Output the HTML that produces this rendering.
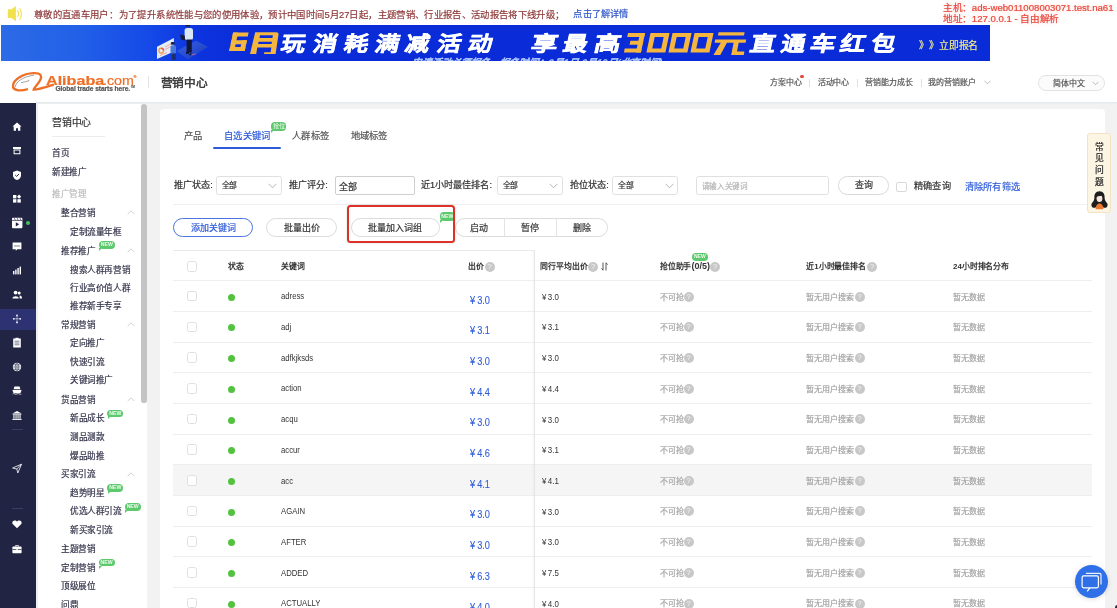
<!DOCTYPE html><html lang="zh-CN"><head><meta charset="utf-8"><style>
*{margin:0;padding:0;box-sizing:border-box}
html,body{width:1117px;height:608px;overflow:hidden;background:#fff;font-family:"Liberation Sans",sans-serif}
.t{position:absolute;white-space:nowrap;-webkit-text-stroke-width:0.2px}
.b{position:absolute}
.new{position:absolute;background:#5cc96c;color:#eefaee;font-size:5px;font-weight:bold;line-height:8px;text-align:center;border-radius:4px;letter-spacing:0;-webkit-text-stroke-width:0}
.bub::after{content:'';position:absolute;left:0.3px;bottom:-2.4px;width:0;height:0;border-left:3.2px solid #5cc96c;border-bottom:3px solid transparent}
.q{position:absolute;width:10px;height:10px;border-radius:50%;background:#c8c8c8;color:#f4f4f4;font-size:7.5px;line-height:10px;text-align:center;font-weight:normal;-webkit-text-stroke-width:0}
.cb{position:absolute;width:10.5px;height:10.5px;border:1px solid #e0e0e0;border-radius:2.5px;background:#fff}
.dot{position:absolute;width:7px;height:7px;border-radius:50%;background:#52c23f}
</style></head><body><div id="w" style="position:absolute;left:0;top:0;width:1117px;height:608px;overflow:hidden;will-change:transform">
<svg class="b" style="left:0;top:0" width="28" height="25" viewBox="0 0 28 25">
<path d="M8.4 9.3 h3 L15.9 6 V21.3 L11.4 18 H8.4 a0.6 0.6 0 0 1 -0.6 -0.6 V9.9 a0.6 0.6 0 0 1 0.6 -0.6Z" fill="#f1e14f"/>
<path d="M17.6 10.3 Q19.6 13.6 17.6 17" stroke="#f1e14f" stroke-width="1.1" fill="none"/>
<path d="M19.6 8.2 Q23.2 13.6 19.6 19.8" stroke="#f1e14f" stroke-width="1.1" fill="none"/>
</svg>
<div class="t" style="left:34px;top:8.60px;font-size:9.35px;line-height:13px;color:#8f3a3a;font-weight:normal;"><span style="letter-spacing:0.35px">尊敬的直通车用户：</span></div>
<div class="t" style="left:118.8px;top:8.60px;font-size:9.35px;line-height:13px;color:#8f3a3a;font-weight:normal;"><span style="letter-spacing:0.35px">为了提升系统性能与您的使用体验，预计中国时间</span>5<span style="letter-spacing:0.35px">月</span>27<span style="letter-spacing:0.35px">日起，主题营销、行业报告、活动报告将下线升级；</span></div>
<div class="t" style="left:573.4px;top:8.40px;font-size:9.2px;line-height:13px;color:#2f57c9;font-weight:normal;"><span style="letter-spacing:0.20px">点击了解详情</span></div>
<div class="t" style="left:943px;top:2.40px;font-size:9.6px;line-height:11px;color:#e8473c;font-weight:normal;text-shadow:0 0 4px rgba(240,110,90,0.35)"><span style="letter-spacing:-0.40px">主机：</span>ads-web011008003071.test.na61</div>
<div class="t" style="left:943px;top:13.40px;font-size:9.6px;line-height:11px;color:#e8473c;font-weight:normal;text-shadow:0 0 4px rgba(240,110,90,0.35)"><span style="letter-spacing:-0.40px">地址：</span>127.0.0.1 - <span style="letter-spacing:-0.40px">自由解析</span></div>
<div class="b" style="left:1px;top:25px;width:989px;height:35.5px;background:linear-gradient(90deg,#2c6ae6 0%,#2260e8 8%,#1549e8 15%,#0c33de 20%,#0a2bd8 26%,#0a2bd8 100%)"></div>
<svg class="b" style="left:150px;top:25px" width="62" height="36" viewBox="0 0 62 36">
<defs><linearGradient id="pf" x1="0" y1="0" x2="1" y2="1"><stop offset="0" stop-color="#3a64e0"/><stop offset="1" stop-color="#1838c0"/></linearGradient></defs>
<path d="M26.5 25.9 L46 15.8 L58 21.8 L38 34.6 Z" fill="url(#pf)"/>
<path d="M7 21.8 L23.9 13.1 L23.9 26.5 L7 33.9 Z" fill="#e4ecf8"/>
<circle cx="11.2" cy="25.6" r="2.4" fill="none" stroke="#f0a050" stroke-width="1.4"/>
<path d="M11.2 23.2 a2.4 2.4 0 0 1 2.4 2.4" stroke="#e05a6a" stroke-width="1.4" fill="none"/>
<path d="M15 22 L21 19 M15 24.5 L21 21.5 M10 30.5 L17 27.5" stroke="#f08a6a" stroke-width="0.7"/>
<rect x="34.6" y="3" width="8.4" height="12" rx="2.5" fill="#d8e6f5"/>
<rect x="35.5" y="-0.5" width="4.6" height="2" rx="1" fill="#1b1f33"/>
<path d="M30.2 9.5 L34.6 10.5 L35.3 15.5 L31 14.6Z" fill="#161c36"/>
<rect x="36.6" y="14.5" width="5.2" height="13" fill="#10173a"/>
<path d="M36 27 h3 v1.8 h-3z M39.5 28.5 h2.6 v1.8 h-2.6z" fill="#0d1330"/>
<rect x="20.5" y="20.3" width="5.5" height="8.5" rx="1.5" fill="#4a78d8"/>
<rect x="20.8" y="17" width="3.8" height="2.8" rx="1.3" fill="#1b1f33"/>
<rect x="21.8" y="28.5" width="4" height="6.5" fill="#1e2f70"/>
<path d="M41 30 L46 28.8" stroke="#e86a8a" stroke-width="0.8"/>
</svg>
<div class="t" style="left:281px;top:29px;font-size:24px;line-height:30px;color:#ffffff;font-weight:900;-webkit-text-stroke:0.7px #ffffff;transform:skewX(-12deg) scale(1,0.86);transform-origin:0 50%">玩</div>
<div class="t" style="left:313px;top:29px;font-size:24px;line-height:30px;color:#ffffff;font-weight:900;-webkit-text-stroke:0.7px #ffffff;transform:skewX(-12deg) scale(1,0.86);transform-origin:0 50%">消</div>
<div class="t" style="left:343.5px;top:29px;font-size:24px;line-height:30px;color:#ffffff;font-weight:900;-webkit-text-stroke:0.7px #ffffff;transform:skewX(-12deg) scale(1,0.86);transform-origin:0 50%">耗</div>
<div class="t" style="left:375px;top:29px;font-size:24px;line-height:30px;color:#ffffff;font-weight:900;-webkit-text-stroke:0.7px #ffffff;transform:skewX(-12deg) scale(1,0.86);transform-origin:0 50%">满</div>
<div class="t" style="left:405px;top:29px;font-size:24px;line-height:30px;color:#ffffff;font-weight:900;-webkit-text-stroke:0.7px #ffffff;transform:skewX(-12deg) scale(1,0.86);transform-origin:0 50%">减</div>
<div class="t" style="left:436.5px;top:29px;font-size:24px;line-height:30px;color:#ffffff;font-weight:900;-webkit-text-stroke:0.7px #ffffff;transform:skewX(-12deg) scale(1,0.86);transform-origin:0 50%">活</div>
<div class="t" style="left:468px;top:29px;font-size:24px;line-height:30px;color:#ffffff;font-weight:900;-webkit-text-stroke:0.7px #ffffff;transform:skewX(-12deg) scale(1,0.86);transform-origin:0 50%">动</div>
<div class="t" style="left:531px;top:29px;font-size:24px;line-height:30px;color:#ffffff;font-weight:900;-webkit-text-stroke:0.7px #ffffff;transform:skewX(-12deg) scale(1.1,0.86);transform-origin:0 50%">享</div>
<div class="t" style="left:562.5px;top:29px;font-size:24px;line-height:30px;color:#ffffff;font-weight:900;-webkit-text-stroke:0.7px #ffffff;transform:skewX(-12deg) scale(1,0.86);transform-origin:0 50%">最</div>
<div class="t" style="left:594px;top:29px;font-size:24px;line-height:30px;color:#ffffff;font-weight:900;-webkit-text-stroke:0.7px #ffffff;transform:skewX(-12deg) scale(1.1,0.86);transform-origin:0 50%">高</div>
<div class="t" style="left:750px;top:29px;font-size:24px;line-height:30px;color:#ffffff;font-weight:900;-webkit-text-stroke:0.7px #ffffff;transform:skewX(-12deg) scale(1.05,0.86);transform-origin:0 50%">直</div>
<div class="t" style="left:780.5px;top:29px;font-size:24px;line-height:30px;color:#ffffff;font-weight:900;-webkit-text-stroke:0.7px #ffffff;transform:skewX(-12deg) scale(1,0.86);transform-origin:0 50%">通</div>
<div class="t" style="left:809.5px;top:29px;font-size:24px;line-height:30px;color:#ffffff;font-weight:900;-webkit-text-stroke:0.7px #ffffff;transform:skewX(-12deg) scale(1.05,0.86);transform-origin:0 50%">车</div>
<div class="t" style="left:840px;top:29px;font-size:24px;line-height:30px;color:#ffffff;font-weight:900;-webkit-text-stroke:0.7px #ffffff;transform:skewX(-12deg) scale(1.05,0.86);transform-origin:0 50%">红</div>
<div class="t" style="left:871px;top:29px;font-size:24px;line-height:30px;color:#ffffff;font-weight:900;-webkit-text-stroke:0.7px #ffffff;transform:skewX(-12deg) scale(1,0.86);transform-origin:0 50%">包</div>
<svg class="b" style="left:0;top:0" width="1000" height="62" viewBox="0 0 1000 62"><g fill="#f5b63f" transform="translate(0 52) skewX(-12) translate(0 -52)"><rect x="229" y="32.6" width="15.5" height="4.0"/><rect x="229" y="32.6" width="5.0" height="18.5"/><rect x="229" y="40.370000000000005" width="15.5" height="4.0"/><rect x="229" y="47.1" width="15.5" height="4.0"/><rect x="239.5" y="40.370000000000005" width="5.0" height="10.729999999999999"/><rect x="624" y="33" width="17" height="4.0"/><rect x="628" y="40.7" width="13" height="4.0"/><rect x="624" y="48.4" width="17" height="4.0"/><rect x="636.0" y="33" width="5.0" height="19.4"/><path d="M646.5 33h19v19.4h-19z M651.5 37.0v11.399999999999999h9.0v-11.399999999999999z" fill-rule="evenodd"/><path d="M668.5 33h19v19.4h-19z M673.5 37.0v11.399999999999999h9.0v-11.399999999999999z" fill-rule="evenodd"/><path d="M690.5 33h19v19.4h-19z M695.5 37.0v11.399999999999999h9.0v-11.399999999999999z" fill-rule="evenodd"/></g><g fill="#f5b63f"><path fill-rule="evenodd" d="M255.2 32.3 H276.4 Q278.9 32.3 278.5 34.6 L275.6 53.9 H264 L264.3 52.2 H270.6 L271.4 47.5 H257.3 L256.2 53.9 H250 Z M260 35.3 H272.9 L272.4 38 H259.5 Z M258.6 41.7 H272 L271.5 44.1 H258.1 Z"/><path d="M718.6 32.2 H744.6 L744 35.6 H718 Z M715.2 39.4 H746.2 L745.6 42.8 H714.6 Z M720.8 42.8 H726.9 L720.3 54.9 H713.4 Z M733.6 42.8 H738.7 L737 51.6 H744.4 L743.8 54.9 H731.2 Z"/></g></svg>
<div class="t" style="left:412px;top:56.50px;font-size:9.7px;line-height:12px;color:#a9c2ff;font-weight:bold;font-style:italic;transform:skewX(-10deg)"><span style="letter-spacing:-0.30px">申请活动必须报名，报名时间：</span>6<span style="letter-spacing:-0.30px">月</span>1<span style="letter-spacing:-0.30px">日</span>-6<span style="letter-spacing:-0.30px">月</span>10<span style="letter-spacing:-0.30px">日</span>(<span style="letter-spacing:-0.30px">北京时间</span>)</div>
<div class="b" style="left:0px;top:60.5px;width:1000px;height:8px;background:#fff"></div>
<div class="t" style="left:918.5px;top:39.00px;font-size:9.8px;line-height:14px;color:#f2ec8c;font-weight:normal;"><span style="letter-spacing:-0.20px">》</span></div>
<div class="t" style="left:928.5px;top:39.00px;font-size:9.8px;line-height:14px;color:#f2ec8c;font-weight:normal;"><span style="letter-spacing:-0.20px">》</span></div>
<div class="t" style="left:939px;top:39.00px;font-size:9.8px;line-height:14px;color:#f2ec8c;font-weight:normal;"><span style="letter-spacing:-0.20px">立即报名</span></div>
<svg class="b" style="left:0;top:60px" width="60" height="40" viewBox="0 60 60 40">
<path d="M27 89.3 C20 91.3 12.5 90.5 13 85.5 C13.6 79.5 23 73.6 33.5 73.2 C41 73 42.5 76 40 80.5 C37.5 85 34 87.5 33.6 89.6 C37 89.8 45 87.3 53 84.8" stroke="#ee7028" stroke-width="2.3" fill="none" stroke-linecap="round"/>
<path d="M15.2 87 C15.8 82 23 76.5 34 75.2" stroke="#333" stroke-width="0.45" fill="none"/>
<path d="M21 82.6 C24 82.2 27 81.4 29 80.6 L28.6 79.8" stroke="#333" stroke-width="0.45" fill="none"/>
</svg>
<div class="t" style="left:45.5px;top:72.50px;font-size:13px;line-height:15px;color:#ee7028;font-weight:bold;letter-spacing:0px;transform:scaleX(1.24);transform-origin:0 50%">Alibaba</div>
<div class="t" style="left:102.5px;top:72.50px;font-size:13px;line-height:15px;color:#ee7028;font-weight:normal;letter-spacing:0px;transform:scaleX(1.1);transform-origin:0 50%">.com</div>
<div class="t" style="left:133.5px;top:73.50px;font-size:4px;line-height:5px;color:#ee6f22;font-weight:normal;">®</div>
<div class="t" style="left:55.5px;top:85.20px;font-size:6.6px;line-height:8px;color:#555;font-weight:bold;letter-spacing:-0.05px">Global trade starts here.</div>
<div class="t" style="left:131px;top:85.50px;font-size:2.6px;line-height:4px;color:#555;font-weight:normal;">TM</div>
<div class="b" style="left:147.5px;top:76px;width:1px;height:11.5px;background:#e3e3e3"></div>
<div class="t" style="left:160.5px;top:74.70px;font-size:11.7px;line-height:16px;color:#333;font-weight:normal;-webkit-text-stroke-width:0.45px"><span style="letter-spacing:-0.30px">营销中心</span></div>
<div class="t" style="left:769.7px;top:77.20px;font-size:7.95px;line-height:12px;color:#555;font-weight:normal;"><span style="letter-spacing:-0.05px">方案中心</span></div>
<div class="t" style="left:817.6px;top:77.20px;font-size:7.95px;line-height:12px;color:#555;font-weight:normal;"><span style="letter-spacing:-0.05px">活动中心</span></div>
<div class="t" style="left:864.9px;top:77.20px;font-size:7.95px;line-height:12px;color:#555;font-weight:normal;"><span style="letter-spacing:-0.05px">营销能力成长</span></div>
<div class="t" style="left:928.3px;top:77.20px;font-size:7.95px;line-height:12px;color:#555;font-weight:normal;"><span style="letter-spacing:-0.05px">我的营销账户</span></div>
<div class="b" style="left:809px;top:78.5px;width:0.8px;height:8.2px;background:#dde0e8"></div>
<div class="b" style="left:857.4px;top:78.5px;width:0.8px;height:8.2px;background:#dde0e8"></div>
<div class="b" style="left:920.6px;top:78.5px;width:0.8px;height:8.2px;background:#dde0e8"></div>
<div class="b" style="left:800.1px;top:74.6px;width:3.7px;height:3.7px;background:#e8473c;border-radius:50%"></div>
<svg class="b" style="left:984px;top:80px" width="7" height="5" viewBox="0 0 7 5"><path d="M0.5 0.8 L3.5 3.8 L6.5 0.8" stroke="#aaa" stroke-width="0.8" fill="none"/></svg>
<div class="b" style="left:1038px;top:74.5px;width:66.5px;height:16px;border:1px solid #e2e2e2;border-radius:8px;background:#fbfbfb"></div>
<div class="t" style="left:1052.7px;top:77.60px;font-size:8px;line-height:12px;color:#555;font-weight:normal;">简体中文</div>
<svg class="b" style="left:1092px;top:80.5px" width="7" height="5" viewBox="0 0 7 5"><path d="M0.5 0.8 L3.5 3.8 L6.5 0.8" stroke="#aaa" stroke-width="0.8" fill="none"/></svg>
<div class="b" style="left:36px;top:102px;width:1081px;height:2.2px;background:linear-gradient(#e4e7eb,#eef0f2)"></div>
<div class="b" style="left:146.8px;top:104px;width:971px;height:504px;background:#f2f2f2"></div>
<div class="b" style="left:159.8px;top:108.8px;width:945.2px;height:500px;background:#fff;border-radius:4px 4px 0 0"></div>
<div class="b" style="left:0px;top:102.8px;width:36px;height:506px;background:#222444"></div>
<div class="b" style="left:0px;top:309px;width:36px;height:20.5px;background:#2d3272"></div>
<div class="b" style="left:36px;top:104px;width:2px;height:504px;background:#eef0f4"></div>
<div class="b" style="left:38px;top:104px;width:108.8px;height:504px;background:#fff"></div>
<div class="b" style="left:141px;top:104.2px;width:5.6px;height:299.2px;background:#c4c4c4;border-radius:2.8px"></div>
<div class="b" style="left:12px;top:428.6px;width:11px;height:0.8px;background:#3a3d66"></div>
<div class="b" style="left:12px;top:508.2px;width:11px;height:0.8px;background:#3a3d66"></div>

<svg class="b" style="left:0;top:103px" width="36" height="505" viewBox="0 103 36 505" fill="#fff">
<!-- home 126.8 -->
<path d="M17 122.5 L21.5 126.6 L20.3 126.6 L20.3 130.8 L18 130.8 L18 128.2 L16 128.2 L16 130.8 L13.7 130.8 L13.7 126.6 L12.5 126.6 Z"/>
<!-- box 150.8 -->
<path d="M13 147 h8 v2 h-8z"/><path d="M13.6 149.6 h6.8 v4.6 h-6.8z M14.6 150.6 v2.6 h4.8 v-2.6z" fill-rule="evenodd"/>
<!-- shield 175 -->
<path d="M17 170.6 L21 172 L21 175.2 C21 178 19 179.4 17 180 C15 179.4 13 178 13 175.2 L13 172 Z"/>
<path d="M15.2 175 L16.6 176.4 L19 174" stroke="#222444" stroke-width="1" fill="none"/>
<!-- apps 198.7 -->
<rect x="13" y="195" width="3.4" height="3.4"/><rect x="13" y="199.2" width="3.4" height="3.4"/><rect x="17.4" y="199.2" width="3.4" height="3.4"/>
<path d="M19.1 194.6 L21.2 196.7 L19.1 198.8 L17 196.7Z"/>
<!-- video 222.9 -->
<rect x="12" y="217.8" width="10.4" height="10.4" rx="1"/>
<path d="M12 220.4 h10.4" stroke="#222444" stroke-width="0.7"/>
<path d="M14.2 217.8 l1.2 2.6 M17 217.8 l1.2 2.6 M19.8 217.8 l1.2 2.6" stroke="#222444" stroke-width="0.6"/>
<path d="M15.8 222.2 L19.2 224.3 L15.8 226.4Z" fill="#222444"/>
<!-- chat 246.6 -->
<path d="M12.6 242.6 h8.8 v6.6 h-4 l-1.6 1.6 v-1.6 h-3.2z"/>
<circle cx="15" cy="245.9" r="0.6" fill="#222444"/><circle cx="17" cy="245.9" r="0.6" fill="#222444"/><circle cx="19" cy="245.9" r="0.6" fill="#222444"/>
<!-- chart 271 -->
<rect x="13" y="271" width="1.4" height="3.4"/><rect x="15.2" y="269.6" width="1.4" height="4.8"/><rect x="17.4" y="268" width="1.4" height="6.4"/><rect x="19.6" y="266.6" width="1.4" height="7.8"/>
<!-- users 295 -->
<circle cx="15.6" cy="292.6" r="1.9"/><path d="M12.4 298.6 C12.4 295.6 18.8 295.6 18.8 298.6Z"/>
<circle cx="19.2" cy="293" r="1.5"/><path d="M19.6 295.4 C21.6 295.6 22 296.8 22 298.6 L19.6 298.6Z"/>
<!-- move 319 -->
<circle cx="17" cy="315.4" r="0.9"/><circle cx="13.8" cy="318.8" r="0.9"/><circle cx="20.2" cy="318.8" r="0.9"/><circle cx="17" cy="322.4" r="0.9"/>
<path d="M17 316 L17 322 M14.4 318.8 L19.6 318.8" stroke="#fff" stroke-width="0.5"/>
<!-- clipboard 342.6 -->
<path d="M13.2 338.6 h7.6 v9 h-7.6z"/><rect x="15.4" y="337.8" width="3.2" height="1.6" fill="#fff"/>
<path d="M14.6 341.2 h4.8 M14.6 343 h4.8 M14.6 344.8 h4.8" stroke="#222444" stroke-width="0.6"/>
<!-- globe 367 -->
<circle cx="17" cy="367" r="4.2"/>
<path d="M12.8 367 h8.4 M17 362.8 v8.4 M13.6 364.8 h6.8 M13.6 369.2 h6.8" stroke="#222444" stroke-width="0.5"/>
<ellipse cx="17" cy="367" rx="1.8" ry="4.2" fill="none" stroke="#222444" stroke-width="0.5"/>
<!-- ship 390.8 -->
<path d="M14.4 386.6 h5.2 l0.8 2.6 h-6.8z"/><path d="M12.4 390 h9.2 l-1.2 3.2 h-6.8z"/><path d="M12.6 394 q1.1 -0.8 2.2 0 q1.1 0.8 2.2 0 q1.1 -0.8 2.2 0 q1.1 0.8 2.2 0" stroke="#fff" stroke-width="0.6" fill="none"/>
<!-- bank 415.4 -->
<path d="M17 411 L21.6 413.4 L12.4 413.4Z"/><rect x="12.6" y="413.8" width="8.8" height="0.9"/>
<rect x="13.4" y="415" width="1.1" height="3.6"/><rect x="15.5" y="415" width="1.1" height="3.6"/><rect x="17.5" y="415" width="1.1" height="3.6"/><rect x="19.5" y="415" width="1.1" height="3.6"/>
<rect x="12.4" y="418.8" width="9.2" height="1.1"/>
<!-- send 468.5 -->
<path d="M21.5 464.2 L12.6 468 L16.8 469 L17.8 473 Z M16.8 469 L21.5 464.2" stroke="#fff" stroke-width="0.8" fill="none" stroke-linejoin="round"/>
<!-- heart 524.3 -->
<path d="M17 528.3 L13.2 524.6 C11.6 523 12.4 520.6 14.6 520.4 C15.6 520.3 16.5 520.9 17 521.6 C17.5 520.9 18.4 520.3 19.4 520.4 C21.6 520.6 22.4 523 20.8 524.6Z"/>
<!-- briefcase 549 -->
<path d="M15.2 545.2 h3.6 v1.4 h-0.9 v-0.6 h-1.8 v0.6 h-0.9z"/><rect x="12.4" y="546.6" width="9.2" height="6.6" rx="0.8"/>
<rect x="12.4" y="549" width="9.2" height="0.7" fill="#222444"/><rect x="16.3" y="548.6" width="1.4" height="1.6" fill="#fff"/>
</svg>
<div class="b" style="left:25.5px;top:220.6px;width:4px;height:4px;background:#44c25a;border-radius:50%"></div>
<div class="t" style="left:52px;top:116.00px;font-size:9.8px;line-height:14px;color:#333;font-weight:normal;"><span style="letter-spacing:-0.20px">营销中心</span></div>
<div class="b" style="left:52px;top:135.8px;width:53px;height:0.8px;background:#ececec"></div>
<div class="t" style="left:52px;top:147.00px;font-size:8.6px;line-height:12px;color:#33334a;font-weight:normal;"><span style="letter-spacing:-0.40px">首页</span></div>
<div class="t" style="left:52px;top:165.90px;font-size:8.6px;line-height:12px;color:#33334a;font-weight:normal;"><span style="letter-spacing:-0.40px">新建推广</span></div>
<div class="t" style="left:52px;top:188.00px;font-size:8.6px;line-height:12px;color:#bbb;font-weight:normal;"><span style="letter-spacing:-0.40px">推广管理</span></div>
<div class="t" style="left:61px;top:206.80px;font-size:8.6px;line-height:12px;color:#33334a;font-weight:normal;"><span style="letter-spacing:-0.40px">整合营销</span></div>
<svg class="b" style="left:126.5px;top:210.3px" width="8" height="5" viewBox="0 0 8 5"><path d="M0.6 4.2 L4 0.8 L7.4 4.2" stroke="#bbb" stroke-width="0.7" fill="none"/></svg>
<div class="t" style="left:70px;top:225.70px;font-size:8.6px;line-height:12px;color:#33334a;font-weight:normal;"><span style="letter-spacing:-0.40px">定制流量年框</span></div>
<div class="t" style="left:61px;top:244.70px;font-size:8.6px;line-height:12px;color:#33334a;font-weight:normal;"><span style="letter-spacing:-0.40px">推荐推广</span></div>
<svg class="b" style="left:126.5px;top:248.2px" width="8" height="5" viewBox="0 0 8 5"><path d="M0.6 4.2 L4 0.8 L7.4 4.2" stroke="#bbb" stroke-width="0.7" fill="none"/></svg>
<div class="t" style="left:70px;top:263.50px;font-size:8.6px;line-height:12px;color:#33334a;font-weight:normal;"><span style="letter-spacing:-0.40px">搜索人群再营销</span></div>
<div class="t" style="left:70px;top:282.00px;font-size:8.6px;line-height:12px;color:#33334a;font-weight:normal;"><span style="letter-spacing:-0.40px">行业高价值人群</span></div>
<div class="t" style="left:70px;top:300.40px;font-size:8.6px;line-height:12px;color:#33334a;font-weight:normal;"><span style="letter-spacing:-0.40px">推荐新手专享</span></div>
<div class="t" style="left:61px;top:318.80px;font-size:8.6px;line-height:12px;color:#33334a;font-weight:normal;"><span style="letter-spacing:-0.40px">常规营销</span></div>
<svg class="b" style="left:126.5px;top:322.3px" width="8" height="5" viewBox="0 0 8 5"><path d="M0.6 4.2 L4 0.8 L7.4 4.2" stroke="#bbb" stroke-width="0.7" fill="none"/></svg>
<div class="t" style="left:70px;top:336.80px;font-size:8.6px;line-height:12px;color:#33334a;font-weight:normal;"><span style="letter-spacing:-0.40px">定向推广</span></div>
<div class="t" style="left:70px;top:355.70px;font-size:8.6px;line-height:12px;color:#33334a;font-weight:normal;"><span style="letter-spacing:-0.40px">快速引流</span></div>
<div class="t" style="left:70px;top:374.40px;font-size:8.6px;line-height:12px;color:#33334a;font-weight:normal;"><span style="letter-spacing:-0.40px">关键词推广</span></div>
<div class="t" style="left:61px;top:393.50px;font-size:8.6px;line-height:12px;color:#33334a;font-weight:normal;"><span style="letter-spacing:-0.40px">货品营销</span></div>
<svg class="b" style="left:126.5px;top:397.0px" width="8" height="5" viewBox="0 0 8 5"><path d="M0.6 4.2 L4 0.8 L7.4 4.2" stroke="#bbb" stroke-width="0.7" fill="none"/></svg>
<div class="t" style="left:70px;top:412.40px;font-size:8.6px;line-height:12px;color:#33334a;font-weight:normal;"><span style="letter-spacing:-0.40px">新品成长</span></div>
<div class="t" style="left:70px;top:430.80px;font-size:8.6px;line-height:12px;color:#33334a;font-weight:normal;"><span style="letter-spacing:-0.40px">测品测款</span></div>
<div class="t" style="left:70px;top:449.70px;font-size:8.6px;line-height:12px;color:#33334a;font-weight:normal;"><span style="letter-spacing:-0.40px">爆品助推</span></div>
<div class="t" style="left:61px;top:468.10px;font-size:8.6px;line-height:12px;color:#33334a;font-weight:normal;"><span style="letter-spacing:-0.40px">买家引流</span></div>
<svg class="b" style="left:126.5px;top:471.6px" width="8" height="5" viewBox="0 0 8 5"><path d="M0.6 4.2 L4 0.8 L7.4 4.2" stroke="#bbb" stroke-width="0.7" fill="none"/></svg>
<div class="t" style="left:70px;top:486.50px;font-size:8.6px;line-height:12px;color:#33334a;font-weight:normal;"><span style="letter-spacing:-0.40px">趋势明星</span></div>
<div class="t" style="left:70px;top:505.40px;font-size:8.6px;line-height:12px;color:#33334a;font-weight:normal;"><span style="letter-spacing:-0.40px">优选人群引流</span></div>
<div class="t" style="left:70px;top:524.40px;font-size:8.6px;line-height:12px;color:#33334a;font-weight:normal;"><span style="letter-spacing:-0.40px">新买家引流</span></div>
<div class="t" style="left:61px;top:542.60px;font-size:8.6px;line-height:12px;color:#33334a;font-weight:normal;"><span style="letter-spacing:-0.40px">主题营销</span></div>
<div class="t" style="left:61px;top:561.70px;font-size:8.6px;line-height:12px;color:#33334a;font-weight:normal;"><span style="letter-spacing:-0.40px">定制营销</span></div>
<div class="t" style="left:61px;top:580.00px;font-size:8.6px;line-height:12px;color:#33334a;font-weight:normal;"><span style="letter-spacing:-0.40px">顶级展位</span></div>
<div class="t" style="left:61px;top:598.60px;font-size:8.6px;line-height:12px;color:#33334a;font-weight:normal;"><span style="letter-spacing:-0.40px">问鼎</span></div>
<div class="new bub" style="left:99px;top:241px;width:15.7px;height:7.8px;font-size:5.2px;line-height:7.8px">NEW</div>
<div class="new bub" style="left:107.4px;top:409.5px;width:15.8px;height:7.6px;font-size:5.2px;line-height:7.6px">NEW</div>
<div class="new bub" style="left:107.4px;top:484px;width:15.8px;height:7.6px;font-size:5.2px;line-height:7.6px">NEW</div>
<div class="new bub" style="left:124.7px;top:502.8px;width:16px;height:7.8px;font-size:5.2px;line-height:7.8px">NEW</div>
<div class="new bub" style="left:98.5px;top:558.5px;width:16px;height:7.8px;font-size:5.2px;line-height:7.8px">NEW</div>
<div class="t" style="left:183.8px;top:129.50px;font-size:9.3px;line-height:13px;color:#555;font-weight:normal;"><span style="letter-spacing:0.30px">产品</span></div>
<div class="t" style="left:224px;top:129.50px;font-size:9.3px;line-height:13px;color:#2f5bd9;font-weight:normal;"><span style="letter-spacing:0.30px">自选关键词</span></div>
<div class="t" style="left:292px;top:129.50px;font-size:9.3px;line-height:13px;color:#555;font-weight:normal;"><span style="letter-spacing:0.30px">人群标签</span></div>
<div class="t" style="left:350.6px;top:129.50px;font-size:9.3px;line-height:13px;color:#555;font-weight:normal;"><span style="letter-spacing:0.30px">地域标签</span></div>
<div class="b" style="left:212.8px;top:147.4px;width:68.7px;height:2px;background:#2f5bd9;border-radius:1px"></div>
<div class="new bub" style="left:271px;top:122.3px;width:15.2px;height:8.6px;font-size:6.2px;line-height:8.6px;font-weight:normal">抢位</div>
<div class="t" style="left:173.8px;top:179.00px;font-size:9.1px;line-height:13px;color:#333;font-weight:normal;"><span style="letter-spacing:0.10px">推广状态</span>:</div>
<div class="b" style="left:215.5px;top:176.2px;width:66px;height:18.4px;border:1px solid #e0e0e0;border-radius:2.5px;background:#fff"></div>
<div class="t" style="left:221.5px;top:180.20px;font-size:7.8px;line-height:11px;color:#333;font-weight:normal;"><span style="letter-spacing:-0.20px">全部</span></div>
<svg class="b" style="left:268.0px;top:182.5px" width="9" height="6" viewBox="0 0 9 6"><path d="M0.6 0.8 L4.5 4.8 L8.4 0.8" stroke="#999" stroke-width="0.7" fill="none"/></svg>
<div class="t" style="left:288.8px;top:179.00px;font-size:9.1px;line-height:13px;color:#333;font-weight:normal;"><span style="letter-spacing:0.10px">推广评分</span>:</div>
<div class="b" style="left:334.5px;top:176.2px;width:80px;height:18.4px;border:1px solid #cfcfcf;border-radius:2px;background:#fff"></div>
<div class="t" style="left:339px;top:181.00px;font-size:9px;line-height:13px;color:#333;font-weight:normal;">全部</div>
<div class="t" style="left:420.8px;top:179.00px;font-size:9.1px;line-height:13px;color:#333;font-weight:normal;"><span style="letter-spacing:0.10px">近</span>1<span style="letter-spacing:0.10px">小时最佳排名</span>:</div>
<div class="b" style="left:496.5px;top:176.2px;width:66px;height:18.4px;border:1px solid #e0e0e0;border-radius:2.5px;background:#fff"></div>
<div class="t" style="left:502.5px;top:180.20px;font-size:7.8px;line-height:11px;color:#333;font-weight:normal;"><span style="letter-spacing:-0.20px">全部</span></div>
<svg class="b" style="left:549.0px;top:182.5px" width="9" height="6" viewBox="0 0 9 6"><path d="M0.6 0.8 L4.5 4.8 L8.4 0.8" stroke="#999" stroke-width="0.7" fill="none"/></svg>
<div class="t" style="left:569.8px;top:179.00px;font-size:9.1px;line-height:13px;color:#333;font-weight:normal;"><span style="letter-spacing:0.10px">抢位状态</span>:</div>
<div class="b" style="left:612.4px;top:176.2px;width:66px;height:18.4px;border:1px solid #e0e0e0;border-radius:2.5px;background:#fff"></div>
<div class="t" style="left:618.4px;top:180.20px;font-size:7.8px;line-height:11px;color:#333;font-weight:normal;"><span style="letter-spacing:-0.20px">全部</span></div>
<svg class="b" style="left:664.9px;top:182.5px" width="9" height="6" viewBox="0 0 9 6"><path d="M0.6 0.8 L4.5 4.8 L8.4 0.8" stroke="#999" stroke-width="0.7" fill="none"/></svg>
<div class="b" style="left:696px;top:176.2px;width:133.2px;height:18.4px;border:1px solid #e0e0e0;border-radius:2.5px;background:#fff"></div>
<div class="t" style="left:701.9px;top:181.30px;font-size:7.6px;line-height:11px;color:#b5b5b5;font-weight:normal;"><span style="letter-spacing:-0.40px">请输入关键词</span></div>
<div class="b" style="left:838px;top:176px;width:51.3px;height:18.6px;border:1px solid #d9d9d9;border-radius:9.3px;background:#fff"></div>
<div class="t" style="left:854.7px;top:178.90px;font-size:9px;line-height:13px;color:#333;font-weight:normal;">查询</div>
<div class="b" style="left:896.4px;top:181.5px;width:10.2px;height:10.2px;border:1px solid #d9d9d9;border-radius:2px;background:#fff"></div>
<div class="t" style="left:914px;top:179.70px;font-size:9.2px;line-height:13px;color:#333;font-weight:normal;"><span style="letter-spacing:0.20px">精确查询</span></div>
<div class="t" style="left:964.9px;top:180.70px;font-size:9.2px;line-height:13px;color:#2f5bd9;font-weight:normal;"><span style="letter-spacing:0.20px">清除所有筛选</span></div>
<div class="b" style="left:173px;top:204px;width:919px;height:0.8px;background:#f0f0f0"></div>
<div class="b" style="left:173.1px;top:218.4px;width:79.9px;height:19px;border:1px solid #4a74e0;border-radius:9.5px;background:#fff"></div>
<div class="t" style="left:173.1px;top:218.9px;width:79.9px;height:18.6px;text-align:center;font-size:9px;line-height:18.6px;color:#2f5bd9">添加关键词</div>
<div class="b" style="left:266.3px;top:218.4px;width:70.5px;height:19px;border:1px solid #dcdcdc;border-radius:9.5px;background:#fff"></div>
<div class="t" style="left:266.3px;top:218.9px;width:70.5px;height:18.6px;text-align:center;font-size:9px;line-height:18.6px;color:#333">批量出价</div>
<div class="b" style="left:350.5px;top:218.4px;width:89.3px;height:19px;border:1px solid #dcdcdc;border-radius:9.5px;background:#fff"></div>
<div class="t" style="left:350.5px;top:218.9px;width:89.3px;height:18.6px;text-align:center;font-size:9px;line-height:18.6px;color:#333">批量加入词组</div>
<div class="b" style="left:454.5px;top:218.4px;width:153.2px;height:19px;border:1px solid #dcdcdc;border-radius:9.5px;background:#fff"></div>
<div class="b" style="left:504.2px;top:218.4px;width:0.8px;height:19px;background:#e3e3e3"></div>
<div class="b" style="left:556.3px;top:218.4px;width:0.8px;height:19px;background:#e3e3e3"></div>
<div class="t" style="left:454px;top:218.6px;width:50.2px;text-align:center;font-size:9px;line-height:18.6px;color:#333">启动</div>
<div class="t" style="left:504.2px;top:218.6px;width:52.1px;text-align:center;font-size:9px;line-height:18.6px;color:#333">暂停</div>
<div class="t" style="left:556.3px;top:218.6px;width:51.4px;text-align:center;font-size:9px;line-height:18.6px;color:#333">删除</div>
<div class="new bub" style="left:439.8px;top:211.8px;width:15px;height:8.9px;font-size:5.2px;line-height:8.9px">NEW</div>
<div class="b" style="left:347px;top:205.3px;width:108px;height:37.8px;border:2px solid #dc3228;border-radius:3.5px;box-shadow:0 0 2px rgba(0,0,0,0.18)"></div>
<div class="b" style="left:173px;top:250.3px;width:362px;height:0.8px;background:#eaeaea"></div>
<div class="b" style="left:173px;top:464.74px;width:919px;height:30.69px;background:#f5f5f5"></div>
<div class="b" style="left:173px;top:280.20000000000005px;width:919px;height:0.8px;background:#eeeeee"></div>
<div class="b" style="left:173px;top:310.89000000000004px;width:919px;height:0.8px;background:#eeeeee"></div>
<div class="b" style="left:173px;top:341.58000000000004px;width:919px;height:0.8px;background:#eeeeee"></div>
<div class="b" style="left:173px;top:372.27000000000004px;width:919px;height:0.8px;background:#eeeeee"></div>
<div class="b" style="left:173px;top:402.96000000000004px;width:919px;height:0.8px;background:#eeeeee"></div>
<div class="b" style="left:173px;top:433.6500000000001px;width:919px;height:0.8px;background:#eeeeee"></div>
<div class="b" style="left:173px;top:464.34000000000003px;width:919px;height:0.8px;background:#eeeeee"></div>
<div class="b" style="left:173px;top:495.0300000000001px;width:919px;height:0.8px;background:#eeeeee"></div>
<div class="b" style="left:173px;top:525.72px;width:919px;height:0.8px;background:#eeeeee"></div>
<div class="b" style="left:173px;top:556.4100000000001px;width:919px;height:0.8px;background:#eeeeee"></div>
<div class="b" style="left:173px;top:587.1px;width:919px;height:0.8px;background:#eeeeee"></div>
<div class="b" style="left:173px;top:617.7900000000001px;width:919px;height:0.8px;background:#eeeeee"></div>
<div class="cb" style="left:186.6px;top:261.05px"></div>
<div class="t" style="left:227.8px;top:260.80px;font-size:7.9px;line-height:11px;color:#333;font-weight:bold;-webkit-text-stroke-width:0"><span style="letter-spacing:-0.10px">状态</span></div>
<div class="t" style="left:281.4px;top:260.80px;font-size:7.9px;line-height:11px;color:#333;font-weight:bold;-webkit-text-stroke-width:0"><span style="letter-spacing:-0.10px">关键词</span></div>
<div class="t" style="left:467.9px;top:260.80px;font-size:7.9px;line-height:11px;color:#333;font-weight:bold;-webkit-text-stroke-width:0"><span style="letter-spacing:-0.10px">出价</span></div>
<div class="q" style="left:484.7px;top:262.1px">?</div>
<div class="t" style="left:540px;top:260.80px;font-size:7.9px;line-height:11px;color:#333;font-weight:bold;-webkit-text-stroke-width:0"><span style="letter-spacing:-0.10px">同行平均出价</span></div>
<div class="q" style="left:588px;top:262.1px">?</div>
<svg class="b" style="left:600.6px;top:261.8px" width="7" height="9" viewBox="0 0 7 9"><path d="M2 0.5 V8.2 M0.4 6.4 L2 8.2 M5 8.5 V0.8 M6.6 2.6 L5 0.8" stroke="#444" stroke-width="0.9" fill="none"/></svg>
<div class="t" style="left:659.8px;top:260.80px;font-size:7.9px;line-height:11px;color:#333;font-weight:bold;-webkit-text-stroke-width:0"><span style="letter-spacing:-0.10px">抢位助手</span><span style="font-size:9px">(0/5)</span></div>
<div class="q" style="left:710px;top:262.1px">?</div>
<div class="new" style="left:691.9px;top:253.1px;width:15.8px;height:7.7px;border-radius:4px;font-size:5px;line-height:7.7px">NEW</div>
<div class="t" style="left:806.4px;top:260.80px;font-size:7.9px;line-height:11px;color:#333;font-weight:bold;-webkit-text-stroke-width:0"><span style="letter-spacing:-0.10px">近</span>1<span style="letter-spacing:-0.10px">小时最佳排名</span></div>
<div class="q" style="left:867px;top:262.1px">?</div>
<div class="t" style="left:953px;top:260.80px;font-size:7.9px;line-height:11px;color:#333;font-weight:bold;-webkit-text-stroke-width:0">24<span style="letter-spacing:-0.10px">小时排名分布</span></div>
<div class="cb" style="left:186.6px;top:290.95px"></div>
<div class="dot" style="left:228.2px;top:293.80px"></div>
<div class="t" style="left:281.4px;top:291.40px;font-size:8.6px;line-height:11px;color:#333;font-weight:normal;-webkit-text-stroke-width:0;transform:scaleX(0.9);transform-origin:0 50%">adress</div>
<div class="t" style="left:470.4px;top:293.60px;font-size:10px;line-height:13px;color:#2f5bd9;font-weight:normal;-webkit-text-stroke-width:0.1px;transform:scaleX(0.92);transform-origin:0 50%">¥<span style="margin-left:2.2px">3.0</span></div>
<div class="t" style="left:542.1px;top:291.80px;font-size:8.6px;line-height:11px;color:#333;font-weight:normal;-webkit-text-stroke-width:0;transform:scaleX(0.92);transform-origin:0 50%">¥<span style="margin-left:1.6px">3.0</span></div>
<div class="t" style="left:660px;top:291.50px;font-size:8px;line-height:11px;color:#a3a3a3;font-weight:normal;">不可抢</div>
<div class="q" style="left:683.5px;top:291.60px">?</div>
<div class="t" style="left:806.4px;top:291.50px;font-size:8px;line-height:11px;color:#a3a3a3;font-weight:normal;">暂无用户搜索</div>
<div class="q" style="left:854.5px;top:291.60px">?</div>
<div class="t" style="left:953px;top:291.50px;font-size:8px;line-height:11px;color:#a3a3a3;font-weight:normal;">暂无数据</div>
<div class="cb" style="left:186.6px;top:321.64px"></div>
<div class="dot" style="left:228.2px;top:324.49px"></div>
<div class="t" style="left:281.4px;top:322.09px;font-size:8.6px;line-height:11px;color:#333;font-weight:normal;-webkit-text-stroke-width:0;transform:scaleX(0.9);transform-origin:0 50%">adj</div>
<div class="t" style="left:470.4px;top:324.29px;font-size:10px;line-height:13px;color:#2f5bd9;font-weight:normal;-webkit-text-stroke-width:0.1px;transform:scaleX(0.92);transform-origin:0 50%">¥<span style="margin-left:2.2px">3.1</span></div>
<div class="t" style="left:542.1px;top:322.49px;font-size:8.6px;line-height:11px;color:#333;font-weight:normal;-webkit-text-stroke-width:0;transform:scaleX(0.92);transform-origin:0 50%">¥<span style="margin-left:1.6px">3.1</span></div>
<div class="t" style="left:660px;top:322.19px;font-size:8px;line-height:11px;color:#a3a3a3;font-weight:normal;">不可抢</div>
<div class="q" style="left:683.5px;top:322.29px">?</div>
<div class="t" style="left:806.4px;top:322.19px;font-size:8px;line-height:11px;color:#a3a3a3;font-weight:normal;">暂无用户搜索</div>
<div class="q" style="left:854.5px;top:322.29px">?</div>
<div class="t" style="left:953px;top:322.19px;font-size:8px;line-height:11px;color:#a3a3a3;font-weight:normal;">暂无数据</div>
<div class="cb" style="left:186.6px;top:352.33px"></div>
<div class="dot" style="left:228.2px;top:355.18px"></div>
<div class="t" style="left:281.4px;top:352.78px;font-size:8.6px;line-height:11px;color:#333;font-weight:normal;-webkit-text-stroke-width:0;transform:scaleX(0.9);transform-origin:0 50%">adfkjksds</div>
<div class="t" style="left:470.4px;top:354.98px;font-size:10px;line-height:13px;color:#2f5bd9;font-weight:normal;-webkit-text-stroke-width:0.1px;transform:scaleX(0.92);transform-origin:0 50%">¥<span style="margin-left:2.2px">3.0</span></div>
<div class="t" style="left:542.1px;top:353.18px;font-size:8.6px;line-height:11px;color:#333;font-weight:normal;-webkit-text-stroke-width:0;transform:scaleX(0.92);transform-origin:0 50%">¥<span style="margin-left:1.6px">3.0</span></div>
<div class="t" style="left:660px;top:352.88px;font-size:8px;line-height:11px;color:#a3a3a3;font-weight:normal;">不可抢</div>
<div class="q" style="left:683.5px;top:352.98px">?</div>
<div class="t" style="left:806.4px;top:352.88px;font-size:8px;line-height:11px;color:#a3a3a3;font-weight:normal;">暂无用户搜索</div>
<div class="q" style="left:854.5px;top:352.98px">?</div>
<div class="t" style="left:953px;top:352.88px;font-size:8px;line-height:11px;color:#a3a3a3;font-weight:normal;">暂无数据</div>
<div class="cb" style="left:186.6px;top:383.02px"></div>
<div class="dot" style="left:228.2px;top:385.87px"></div>
<div class="t" style="left:281.4px;top:383.47px;font-size:8.6px;line-height:11px;color:#333;font-weight:normal;-webkit-text-stroke-width:0;transform:scaleX(0.9);transform-origin:0 50%">action</div>
<div class="t" style="left:470.4px;top:385.67px;font-size:10px;line-height:13px;color:#2f5bd9;font-weight:normal;-webkit-text-stroke-width:0.1px;transform:scaleX(0.92);transform-origin:0 50%">¥<span style="margin-left:2.2px">4.4</span></div>
<div class="t" style="left:542.1px;top:383.87px;font-size:8.6px;line-height:11px;color:#333;font-weight:normal;-webkit-text-stroke-width:0;transform:scaleX(0.92);transform-origin:0 50%">¥<span style="margin-left:1.6px">4.4</span></div>
<div class="t" style="left:660px;top:383.57px;font-size:8px;line-height:11px;color:#a3a3a3;font-weight:normal;">不可抢</div>
<div class="q" style="left:683.5px;top:383.67px">?</div>
<div class="t" style="left:806.4px;top:383.57px;font-size:8px;line-height:11px;color:#a3a3a3;font-weight:normal;">暂无用户搜索</div>
<div class="q" style="left:854.5px;top:383.67px">?</div>
<div class="t" style="left:953px;top:383.57px;font-size:8px;line-height:11px;color:#a3a3a3;font-weight:normal;">暂无数据</div>
<div class="cb" style="left:186.6px;top:413.71px"></div>
<div class="dot" style="left:228.2px;top:416.56px"></div>
<div class="t" style="left:281.4px;top:414.16px;font-size:8.6px;line-height:11px;color:#333;font-weight:normal;-webkit-text-stroke-width:0;transform:scaleX(0.9);transform-origin:0 50%">acqu</div>
<div class="t" style="left:470.4px;top:416.36px;font-size:10px;line-height:13px;color:#2f5bd9;font-weight:normal;-webkit-text-stroke-width:0.1px;transform:scaleX(0.92);transform-origin:0 50%">¥<span style="margin-left:2.2px">3.0</span></div>
<div class="t" style="left:542.1px;top:414.56px;font-size:8.6px;line-height:11px;color:#333;font-weight:normal;-webkit-text-stroke-width:0;transform:scaleX(0.92);transform-origin:0 50%">¥<span style="margin-left:1.6px">3.0</span></div>
<div class="t" style="left:660px;top:414.26px;font-size:8px;line-height:11px;color:#a3a3a3;font-weight:normal;">不可抢</div>
<div class="q" style="left:683.5px;top:414.36px">?</div>
<div class="t" style="left:806.4px;top:414.26px;font-size:8px;line-height:11px;color:#a3a3a3;font-weight:normal;">暂无用户搜索</div>
<div class="q" style="left:854.5px;top:414.36px">?</div>
<div class="t" style="left:953px;top:414.26px;font-size:8px;line-height:11px;color:#a3a3a3;font-weight:normal;">暂无数据</div>
<div class="cb" style="left:186.6px;top:444.40px"></div>
<div class="dot" style="left:228.2px;top:447.25px"></div>
<div class="t" style="left:281.4px;top:444.85px;font-size:8.6px;line-height:11px;color:#333;font-weight:normal;-webkit-text-stroke-width:0;transform:scaleX(0.9);transform-origin:0 50%">accur</div>
<div class="t" style="left:470.4px;top:447.05px;font-size:10px;line-height:13px;color:#2f5bd9;font-weight:normal;-webkit-text-stroke-width:0.1px;transform:scaleX(0.92);transform-origin:0 50%">¥<span style="margin-left:2.2px">4.6</span></div>
<div class="t" style="left:542.1px;top:445.25px;font-size:8.6px;line-height:11px;color:#333;font-weight:normal;-webkit-text-stroke-width:0;transform:scaleX(0.92);transform-origin:0 50%">¥<span style="margin-left:1.6px">3.1</span></div>
<div class="t" style="left:660px;top:444.95px;font-size:8px;line-height:11px;color:#a3a3a3;font-weight:normal;">不可抢</div>
<div class="q" style="left:683.5px;top:445.05px">?</div>
<div class="t" style="left:806.4px;top:444.95px;font-size:8px;line-height:11px;color:#a3a3a3;font-weight:normal;">暂无用户搜索</div>
<div class="q" style="left:854.5px;top:445.05px">?</div>
<div class="t" style="left:953px;top:444.95px;font-size:8px;line-height:11px;color:#a3a3a3;font-weight:normal;">暂无数据</div>
<div class="cb" style="left:186.6px;top:475.09px"></div>
<div class="dot" style="left:228.2px;top:477.94px"></div>
<div class="t" style="left:281.4px;top:475.54px;font-size:8.6px;line-height:11px;color:#333;font-weight:normal;-webkit-text-stroke-width:0;transform:scaleX(0.9);transform-origin:0 50%">acc</div>
<div class="t" style="left:470.4px;top:477.74px;font-size:10px;line-height:13px;color:#2f5bd9;font-weight:normal;-webkit-text-stroke-width:0.1px;transform:scaleX(0.92);transform-origin:0 50%">¥<span style="margin-left:2.2px">4.1</span></div>
<div class="t" style="left:542.1px;top:475.94px;font-size:8.6px;line-height:11px;color:#333;font-weight:normal;-webkit-text-stroke-width:0;transform:scaleX(0.92);transform-origin:0 50%">¥<span style="margin-left:1.6px">4.1</span></div>
<div class="t" style="left:660px;top:475.64px;font-size:8px;line-height:11px;color:#a3a3a3;font-weight:normal;">不可抢</div>
<div class="q" style="left:683.5px;top:475.74px">?</div>
<div class="t" style="left:806.4px;top:475.64px;font-size:8px;line-height:11px;color:#a3a3a3;font-weight:normal;">暂无用户搜索</div>
<div class="q" style="left:854.5px;top:475.74px">?</div>
<div class="t" style="left:953px;top:475.64px;font-size:8px;line-height:11px;color:#a3a3a3;font-weight:normal;">暂无数据</div>
<div class="cb" style="left:186.6px;top:505.78px"></div>
<div class="dot" style="left:228.2px;top:508.63px"></div>
<div class="t" style="left:281.4px;top:506.23px;font-size:8.6px;line-height:11px;color:#333;font-weight:normal;-webkit-text-stroke-width:0;transform:scaleX(0.9);transform-origin:0 50%">AGAIN</div>
<div class="t" style="left:470.4px;top:508.43px;font-size:10px;line-height:13px;color:#2f5bd9;font-weight:normal;-webkit-text-stroke-width:0.1px;transform:scaleX(0.92);transform-origin:0 50%">¥<span style="margin-left:2.2px">3.0</span></div>
<div class="t" style="left:542.1px;top:506.63px;font-size:8.6px;line-height:11px;color:#333;font-weight:normal;-webkit-text-stroke-width:0;transform:scaleX(0.92);transform-origin:0 50%">¥<span style="margin-left:1.6px">3.0</span></div>
<div class="t" style="left:660px;top:506.33px;font-size:8px;line-height:11px;color:#a3a3a3;font-weight:normal;">不可抢</div>
<div class="q" style="left:683.5px;top:506.43px">?</div>
<div class="t" style="left:806.4px;top:506.33px;font-size:8px;line-height:11px;color:#a3a3a3;font-weight:normal;">暂无用户搜索</div>
<div class="q" style="left:854.5px;top:506.43px">?</div>
<div class="t" style="left:953px;top:506.33px;font-size:8px;line-height:11px;color:#a3a3a3;font-weight:normal;">暂无数据</div>
<div class="cb" style="left:186.6px;top:536.47px"></div>
<div class="dot" style="left:228.2px;top:539.32px"></div>
<div class="t" style="left:281.4px;top:536.92px;font-size:8.6px;line-height:11px;color:#333;font-weight:normal;-webkit-text-stroke-width:0;transform:scaleX(0.9);transform-origin:0 50%">AFTER</div>
<div class="t" style="left:470.4px;top:539.12px;font-size:10px;line-height:13px;color:#2f5bd9;font-weight:normal;-webkit-text-stroke-width:0.1px;transform:scaleX(0.92);transform-origin:0 50%">¥<span style="margin-left:2.2px">3.0</span></div>
<div class="t" style="left:542.1px;top:537.32px;font-size:8.6px;line-height:11px;color:#333;font-weight:normal;-webkit-text-stroke-width:0;transform:scaleX(0.92);transform-origin:0 50%">¥<span style="margin-left:1.6px">3.0</span></div>
<div class="t" style="left:660px;top:537.02px;font-size:8px;line-height:11px;color:#a3a3a3;font-weight:normal;">不可抢</div>
<div class="q" style="left:683.5px;top:537.12px">?</div>
<div class="t" style="left:806.4px;top:537.02px;font-size:8px;line-height:11px;color:#a3a3a3;font-weight:normal;">暂无用户搜索</div>
<div class="q" style="left:854.5px;top:537.12px">?</div>
<div class="t" style="left:953px;top:537.02px;font-size:8px;line-height:11px;color:#a3a3a3;font-weight:normal;">暂无数据</div>
<div class="cb" style="left:186.6px;top:567.16px"></div>
<div class="dot" style="left:228.2px;top:570.01px"></div>
<div class="t" style="left:281.4px;top:567.61px;font-size:8.6px;line-height:11px;color:#333;font-weight:normal;-webkit-text-stroke-width:0;transform:scaleX(0.9);transform-origin:0 50%">ADDED</div>
<div class="t" style="left:470.4px;top:569.81px;font-size:10px;line-height:13px;color:#2f5bd9;font-weight:normal;-webkit-text-stroke-width:0.1px;transform:scaleX(0.92);transform-origin:0 50%">¥<span style="margin-left:2.2px">6.3</span></div>
<div class="t" style="left:542.1px;top:568.01px;font-size:8.6px;line-height:11px;color:#333;font-weight:normal;-webkit-text-stroke-width:0;transform:scaleX(0.92);transform-origin:0 50%">¥<span style="margin-left:1.6px">7.5</span></div>
<div class="t" style="left:660px;top:567.71px;font-size:8px;line-height:11px;color:#a3a3a3;font-weight:normal;">不可抢</div>
<div class="q" style="left:683.5px;top:567.81px">?</div>
<div class="t" style="left:806.4px;top:567.71px;font-size:8px;line-height:11px;color:#a3a3a3;font-weight:normal;">暂无用户搜索</div>
<div class="q" style="left:854.5px;top:567.81px">?</div>
<div class="t" style="left:953px;top:567.71px;font-size:8px;line-height:11px;color:#a3a3a3;font-weight:normal;">暂无数据</div>
<div class="cb" style="left:186.6px;top:597.85px"></div>
<div class="dot" style="left:228.2px;top:600.70px"></div>
<div class="t" style="left:281.4px;top:598.30px;font-size:8.6px;line-height:11px;color:#333;font-weight:normal;-webkit-text-stroke-width:0;transform:scaleX(0.9);transform-origin:0 50%">ACTUALLY</div>
<div class="t" style="left:470.4px;top:600.50px;font-size:10px;line-height:13px;color:#2f5bd9;font-weight:normal;-webkit-text-stroke-width:0.1px;transform:scaleX(0.92);transform-origin:0 50%">¥<span style="margin-left:2.2px">4.0</span></div>
<div class="t" style="left:542.1px;top:598.70px;font-size:8.6px;line-height:11px;color:#333;font-weight:normal;-webkit-text-stroke-width:0;transform:scaleX(0.92);transform-origin:0 50%">¥<span style="margin-left:1.6px">4.0</span></div>
<div class="t" style="left:660px;top:598.40px;font-size:8px;line-height:11px;color:#a3a3a3;font-weight:normal;">不可抢</div>
<div class="q" style="left:683.5px;top:598.50px">?</div>
<div class="t" style="left:806.4px;top:598.40px;font-size:8px;line-height:11px;color:#a3a3a3;font-weight:normal;">暂无用户搜索</div>
<div class="q" style="left:854.5px;top:598.50px">?</div>
<div class="t" style="left:953px;top:598.40px;font-size:8px;line-height:11px;color:#a3a3a3;font-weight:normal;">暂无数据</div>
<div class="b" style="left:531.5px;top:250.7px;width:3px;height:360px;background:linear-gradient(90deg,rgba(0,0,0,0),rgba(0,0,0,0.05))"></div>
<div class="b" style="left:534.4px;top:250.7px;width:1px;height:360px;background:#e6e6e6"></div>
<div class="b" style="left:1087.3px;top:132.5px;width:24px;height:80.5px;background:#fdf5e4;border:1px solid #f3e3c3;border-radius:3px"></div>
<div class="t" style="left:1087.5px;top:140.8px;width:24px;text-align:center;font-size:8.8px;line-height:12px;color:#222;-webkit-text-stroke:0.2px #222">常</div>
<div class="t" style="left:1087.5px;top:152.4px;width:24px;text-align:center;font-size:8.8px;line-height:12px;color:#222;-webkit-text-stroke:0.2px #222">见</div>
<div class="t" style="left:1087.5px;top:164.2px;width:24px;text-align:center;font-size:8.8px;line-height:12px;color:#222;-webkit-text-stroke:0.2px #222">问</div>
<div class="t" style="left:1087.5px;top:176px;width:24px;text-align:center;font-size:8.8px;line-height:12px;color:#222;-webkit-text-stroke:0.2px #222">题</div>
<svg class="b" style="left:1090px;top:189.5px" width="19" height="20" viewBox="0 0 19 20">
<path d="M9.5 1.2 C5.5 1.2 4.2 4.5 4.4 7.5 C4.5 10 3.2 11.6 2 13 C1 14.2 1.2 16.4 2.6 17.4 C3.6 18.1 5 17.8 6 17.2 L13 17.2 C14 17.8 15.4 18.1 16.4 17.4 C17.8 16.4 18 14.2 17 13 C15.8 11.6 14.5 10 14.6 7.5 C14.8 4.5 13.5 1.2 9.5 1.2Z" fill="#1d1d1d"/>
<ellipse cx="9.5" cy="8.6" rx="2.9" ry="3.5" fill="#f5e4de"/>
<path d="M6.3 7 C7 4.4 9.5 3.6 12.6 5.6 C11 5.8 8.6 6 6.3 7Z" fill="#1d1d1d"/>
<path d="M5.6 19.2 C5.6 15.6 7.2 13.4 9.5 13.4 C11.8 13.4 13.4 15.6 13.4 19.2Z" fill="#ea7a2f"/>
</svg>
<div class="b" style="left:1075.2px;top:565.4px;width:33px;height:33px;border-radius:50%;background:#2f6fe8;box-shadow:0 1px 5px rgba(0,0,0,0.15)"></div>
<svg class="b" style="left:1074.9px;top:565.2px" width="34" height="34" viewBox="0 0 34 34">
<path d="M10.9 8.3 h13.6 a1.5 1.5 0 0 1 1.5 1.5 v9.7" stroke="#fff" stroke-width="1.2" fill="none" opacity="0.9"/>
<path d="M8.6 10.9 h13.3 a1.5 1.5 0 0 1 1.5 1.5 v8.9 a1.5 1.5 0 0 1 -1.5 1.5 h-6.8 l-3 3.5 M15.1 22.8 h-6.5 a1.5 1.5 0 0 1 -1.5 -1.5 v-8.9 a1.5 1.5 0 0 1 1.5 -1.5" stroke="#fff" stroke-width="1.2" fill="none"/>
</svg>
<div class="b" style="left:1114.6px;top:604.6px;width:5px;height:5px;background:#2a2a3a;border-radius:50%"></div>
</div></body></html>
